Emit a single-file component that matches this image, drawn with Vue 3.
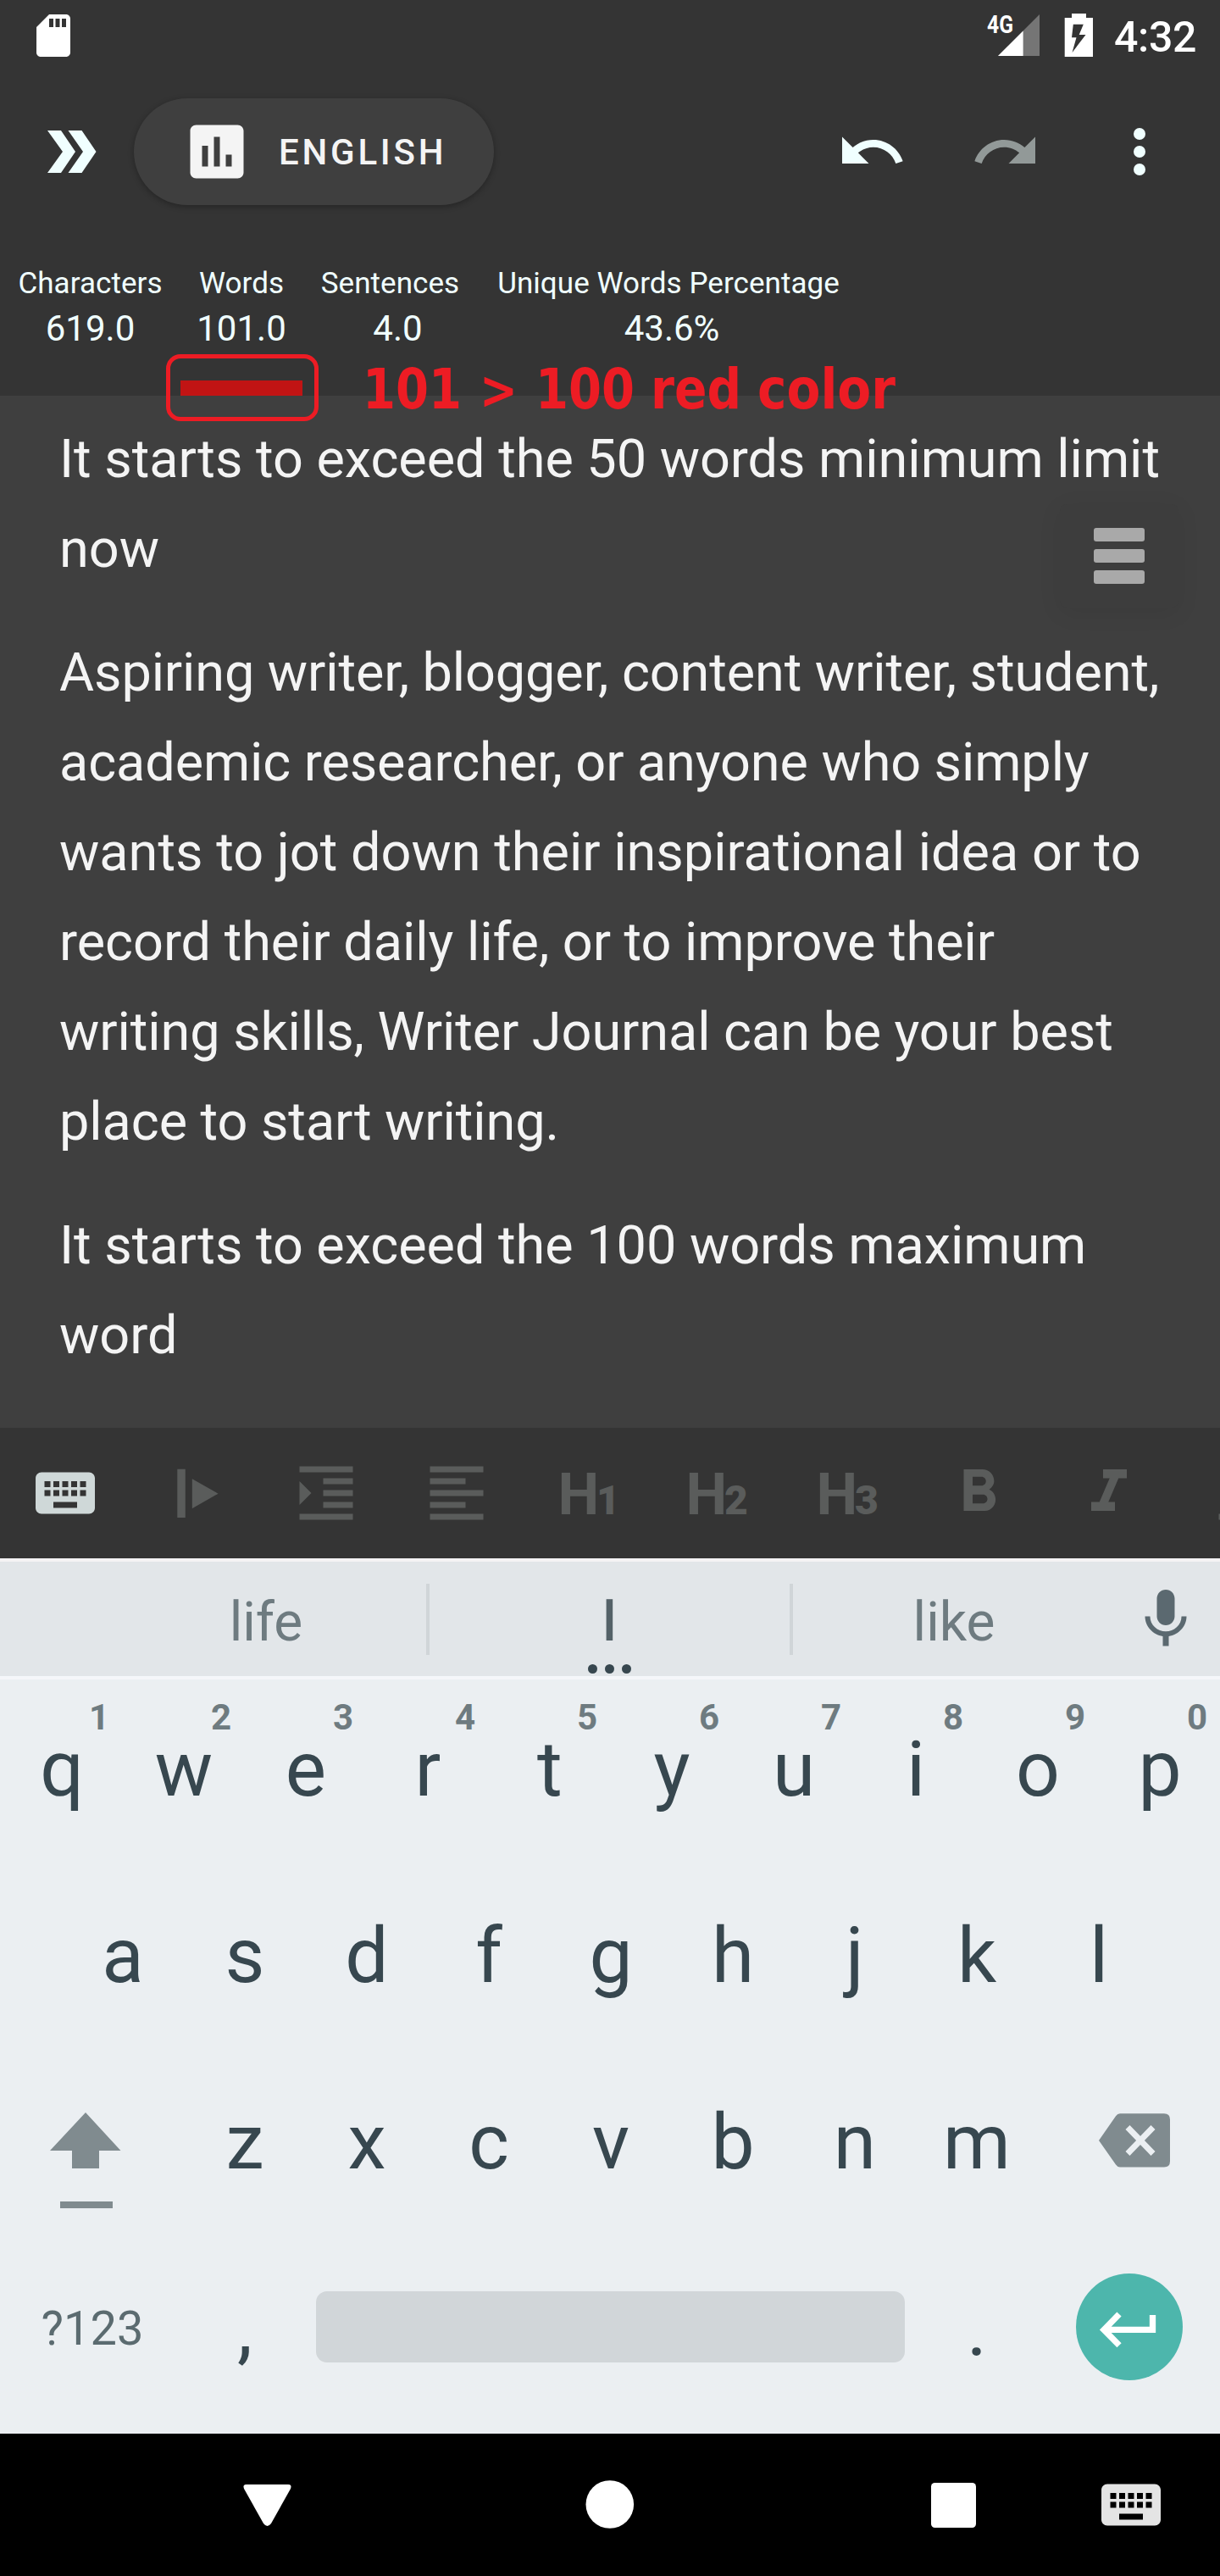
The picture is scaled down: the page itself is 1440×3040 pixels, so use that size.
<script setup>
const stats = [
  { label: 'Characters', value: '619.0' },
  { label: 'Words', value: '101.0', exceeded: true },
  { label: 'Sentences', value: '4.0', shift: 9 },
  { label: 'Unique Words Percentage', value: '43.6%', shift: 4 },
]

// Each line carries its own tracking in px
const paragraphs = [
  [
    { text: 'It starts to exceed the 50 words minimum limit', track: -0.04 },
    { text: 'now', track: 0 },
  ],
  [
    { text: 'Aspiring writer, blogger, content writer, student,', track: -0.11 },
    { text: 'academic researcher, or anyone who simply', track: -0.1 },
    { text: 'wants to jot down their inspirational idea or to', track: 0 },
    { text: 'record their daily life, or to improve their', track: -0.05 },
    { text: 'writing skills, Writer Journal can be your best', track: -0.075 },
    { text: 'place to start writing.', track: -0.07 },
  ],
  [
    { text: 'It starts to exceed the 100 words maximum', track: -0.045 },
    { text: 'word', track: 0 },
  ],
]

const keyboardPath =
  'M20 5H4c-1.1 0-1.99.9-1.99 2L2 17c0 1.1.9 2 2 2h16c1.1 0 2-.9 2-2V7c0-1.1-.9-2-2-2zm-9 3h2v2h-2V8zm0 3h2v2h-2v-2zM8 8h2v2H8V8zm0 3h2v2H8v-2zm-1 2H5v-2h2v2zm0-3H5V8h2v2zm9 7H8v-2h8v2zm0-4h-2v-2h2v2zm0-3h-2V8h2v2zm3 3h-2v-2h2v2zm0-3h-2V8h2v2z'

const tools = [
  { name: 'keyboard', path: keyboardPath, active: true },
  { name: 'cursor', path: 'M5.8 3.9h2.7v16.4H5.8zM10.8 7.2v10l8.8-5z' },
  { name: 'indent', path: 'M3 21h18v-2H3v2zM3 8v8l4-4-4-4zm8 9h10v-2H11v2zM3 3v2h18V3H3zm8 6h10V7H11v2zm0 4h10v-2H11v2z' },
  { name: 'align', path: 'M15 15H3v2h12v-2zm0-8H3v2h12V7zM3 13h18v-2H3v2zm0 8h18v-2H3v2zM3 3v2h18V3H3z' },
  { name: 'h1', level: '1', x: 7.5, dx: 53 },
  { name: 'h2', level: '2', x: 4.5, dx: 50 },
  { name: 'h3', level: '3', x: 4.5, dx: 50 },
  { name: 'bold', path: 'M15.6 10.79c.97-.67 1.65-1.77 1.65-2.79 0-2.26-1.75-4-4-4H7v14h7.04c2.09 0 3.71-1.7 3.71-3.79 0-1.52-.86-2.82-2.15-3.42zM10 6.5h3c.83 0 1.5.67 1.5 1.5s-.67 1.5-1.5 1.5h-3v-3zm3.5 9H10v-3h3.5c.83 0 1.5.67 1.5 1.5s-.67 1.5-1.5 1.5z' },
  { name: 'italic', path: 'M10 4v3h2.21l-3.42 8H6v3h8v-3h-2.21l3.42-8H18V4z' },
  { name: 'underline', path: 'M12 17c3.31 0 6-2.69 6-6V3h-2.5v8c0 1.93-1.57 3.5-3.5 3.5S8.5 12.93 8.5 11V3H6v8c0 3.31 2.69 6 6 6zm-7 2v2h14v-2H5z' },
]

const topRow = [...'qwertyuiop'].map((key, i) => ({ key, hint: String((i + 1) % 10) }))
const homeRow = [...'asdfghjkl']
const bottomRow = [...'zxcvbnm']
</script>

<template>
  <div class="phone">
    <div class="header">
      <div class="status">
        <svg class="sd" width="60" height="60" viewBox="0 0 24 24" fill="#fff">
          <path d="M18 2h-8L4.02 8 4 20c0 1.1.9 2 2 2h12c1.1 0 2-.9 2-2V4c0-1.1-.9-2-2-2zm-6 6h-2V4h2v4zm3 0h-2V4h2v4zm3 0h-2V4h2v4z" />
        </svg>
        <svg width="130" height="84" viewBox="1164 0 130 84" fill="#fff">
          <text x="1165" y="39" font-family="Roboto" font-weight="700" font-size="29" textLength="31" lengthAdjust="spacingAndGlyphs">4G</text>
          <path d="M1227 17V66H1178z" fill="#757575" />
          <path d="M1207.6 36.4V66H1178z" />
          <path fill-rule="evenodd" d="M1265 16h17v5h8v46h-33.300V21h8.300zM1266.800 28.700L1265 44.300h5.500L1265.500 62 1281.500 41h-7.800L1278.800 28.700z" />
        </svg>
        <span class="clock">4:32</span>
      </div>

      <div class="appbar">
        <svg class="chevrons" width="58" height="50" viewBox="56 154 58 50" fill="#f0ffff">
          <path d="M56 154h16l17 25-17 25H56l18-25zM80.500 154h16l17 25-17 25h-16l17.500-25z" />
        </svg>
        <div class="pill">
          <svg width="84" height="84" viewBox="0 0 24 24" fill="#f4f4f4">
            <path d="M19 3H5c-1.100 0-2 .9-2 2v14c0 1.100.9 2 2 2h14c1.100 0 2-.9 2-2V5c0-1.100-.9-2-2-2zM9 17H7v-7h2v7zm4 0h-2V7h2v10zm4 0h-2v-4h2v4z" />
          </svg>
          <span>ENGLISH</span>
        </div>
        <div class="actions">
          <svg width="84" height="84" viewBox="0 0 24 24" fill="#f0ffff">
            <path d="M12.5 8c-2.65 0-5.05.99-6.9 2.6L2 7v9h9l-3.62-3.62c1.39-1.16 3.16-1.88 5.12-1.88 3.54 0 6.55 2.31 7.6 5.5l2.37-.78C21.08 11.03 17.15 8 12.5 8z" />
          </svg>
          <svg width="84" height="84" viewBox="0 0 24 24" fill="#929998">
            <path d="M18.4 10.6C16.55 8.99 14.15 8 11.5 8c-4.65 0-8.58 3.03-9.96 7.22L3.9 16c1.05-3.19 4.05-5.5 7.6-5.5 1.95 0 3.73.72 5.12 1.88L13 16h9V7l-3.600 3.600z" />
          </svg>
          <svg width="84" height="84" viewBox="0 0 24 24" fill="#f0ffff">
            <circle cx="12" cy="6" r="2" /><circle cx="12" cy="12" r="2" /><circle cx="12" cy="18" r="2" />
          </svg>
        </div>
      </div>

      <div class="stats">
        <div v-for="s in stats" :key="s.label" class="stat">
          <span class="label">{{ s.label }}</span>
          <span class="value" :style="{ paddingLeft: (s.shift || 0) * 2 + 'px' }">{{ s.value }}</span>
          <i v-if="s.exceeded" class="bar"></i>
        </div>
      </div>
      <div class="mark"></div>
      <svg class="note" width="660" height="100" viewBox="420 410 660 100" fill="#ed1c24">
        <g font-family="'DejaVu Sans', sans-serif" font-weight="700" font-size="66">
          <text x="428" y="482" textLength="117" lengthAdjust="spacingAndGlyphs">101</text>
          <text x="566" y="482" font-size="62" textLength="45" lengthAdjust="spacingAndGlyphs">&gt;</text>
          <text x="632" y="482" textLength="117" lengthAdjust="spacingAndGlyphs">100</text>
          <text x="768" y="482" textLength="107" lengthAdjust="spacingAndGlyphs">red</text>
          <text x="894" y="482" textLength="163" lengthAdjust="spacingAndGlyphs">color</text>
        </g>
      </svg>
    </div>

    <div class="editor">
      <p v-for="(lines, i) in paragraphs" :key="i">
        <span v-for="line in lines" :key="line.text" :style="{ letterSpacing: line.track + 'px' }">{{ line.text }}</span>
      </p>
      <div class="float"><i></i><i></i><i></i></div>
    </div>

    <div class="toolbar">
      <div v-for="t in tools" :key="t.name" class="tool" :class="{ active: t.active }">
        <svg v-if="t.path" width="84" height="84" viewBox="0 0 24 24"><path :d="t.path" /></svg>
        <svg v-else width="84" height="84" viewBox="0 0 84 84" font-family="Roboto" font-weight="700">
          <text y="66.500"><tspan :x="t.x" font-size="69">H</tspan><tspan :x="t.dx" font-size="48" font-weight="900">{{ t.level }}</tspan></text>
        </svg>
      </div>
    </div>

    <div class="suggest">
      <span class="word first">life</span>
      <i class="sep"></i>
      <span class="word mid">l<b><i></i><i></i><i></i></b></span>
      <i class="sep"></i>
      <span class="word last">like</span>
      <svg class="mic" width="84" height="84" viewBox="0 0 24 24" fill="#5b6970">
        <path d="M12 14c1.66 0 2.99-1.34 2.99-3L15 5c0-1.66-1.34-3-3-3S9 3.34 9 5v6c0 1.66 1.34 3 3 3zm5.3-3c0 3-2.54 5.1-5.3 5.1S6.7 14 6.7 11H5c0 3.41 2.72 6.23 6 6.72V21h2v-3.28c3.28-.48 6-3.3 6-6.72h-1.700z" />
      </svg>
    </div>

    <div class="keyboard">
      <div class="row top">
        <span v-for="k in topRow" :key="k.key" class="key">{{ k.key }}<sup>{{ k.hint }}</sup></span>
      </div>
      <div class="row home">
        <span v-for="k in homeRow" :key="k" class="key">{{ k }}</span>
      </div>
      <div class="row">
        <svg width="216" height="220" viewBox="0 0 216 220" fill="#808b8f">
          <path d="M101 75l41.500 45H117v21H85v-21H59zM71 180h62v8H71z" />
        </svg>
        <span v-for="k in bottomRow" :key="k" class="key">{{ k }}</span>
        <svg width="216" height="220" viewBox="0 0 216 220">
          <path d="M98 76.300h52q7 0 7 7v49.200q0 7-7 7H98q-3 0-5-3L73 108l20-28.700q2-3 5-3z" fill="#808b8f" />
          <path d="M107 92.500l30 31M137 92.500l-30 31" stroke="#ebeff2" stroke-width="7" />
        </svg>
      </div>
      <div class="row">
        <span class="symbols">?123</span>
        <span class="key">,</span>
        <i class="space"></i>
        <span class="key">.</span>
        <div class="enter">
          <svg width="126" height="126" viewBox="1269.500 2683 126 126" fill="none" stroke="#fff" stroke-width="7.300">
            <path d="M1360 2732v17.400h-57M1320.500 2731l-18 18.400 18 18.400" />
          </svg>
        </div>
      </div>
    </div>

    <div class="nav">
      <svg width="1440" height="168" viewBox="0 2872 1440 168" fill="#fff">
        <path d="M291 2932h49q5 0 3 5l-23 41q-4.500 6-9 0l-23-41q-2-5 3-5z" />
        <circle cx="719.800" cy="2955.500" r="28.300" />
        <rect x="1099" y="2930" width="53" height="53" rx="4.500" />
        <svg x="1293" y="2914" width="84" height="84" viewBox="0 0 24 24" fill="#e4e4e4"><path :d="keyboardPath" /></svg>
      </svg>
    </div>
  </div>
</template>

<style>
body { margin: 0; background: #000; }
</style>

<style scoped>
.phone {
  width: 1440px;
  height: 3040px;
  overflow: hidden;
  display: flex;
  flex-direction: column;
  font-family: Roboto, sans-serif;
}
svg { display: block; flex: none; }
.header { position: relative; height: 467px; background: #343434; flex: none; }
.status { height: 84px; display: flex; align-items: center; color: #fff; }
.sd { margin-left: 33px; margin-right: 1071px; }
.clock { margin-left: 21px; margin-top: 4px; font-size: 50px; font-weight: 500; line-height: 84px; letter-spacing: -0.3px; }
.appbar { height: 190px; display: flex; align-items: center; }
.chevrons { margin-left: 56px; }
.pill {
  margin-left: 44px;
  width: 425px;
  height: 126px;
  box-sizing: border-box;
  padding-left: 56px;
  border-radius: 63px;
  background: #3f3f3f;
  box-shadow: 0 2px 7px rgba(0, 0, 0, 0.3);
  display: flex;
  align-items: center;
  gap: 31px;
  color: #f4f4f4;
  font-size: 42px;
  font-weight: 500;
  line-height: 52px;
  letter-spacing: 3.75px;
}
.pill span { padding-top: 1px; }
.actions { margin-left: 404px; display: flex; gap: 74px; }
.stats { height: 193px; display: grid; grid-template-columns: 213px 144px 207px 450px; color: #f0ffff; }
.stat { display: flex; flex-direction: column; align-items: center; white-space: nowrap; }
.label { margin-top: 35px; font-size: 35px; line-height: 52px; letter-spacing: 0.06px; }
.value { font-size: 42px; line-height: 54px; }
.bar { width: 144px; height: 18px; margin-top: auto; background: #c11414; }
.mark {
  position: absolute;
  left: 196px;
  top: 418px;
  width: 180px;
  height: 79px;
  box-sizing: border-box;
  border: 5px solid #ed1c24;
  border-radius: 17px;
  z-index: 2;
}
.note { position: absolute; left: 420px; top: 410px; z-index: 2; }
.editor {
  position: relative;
  height: 1218px;
  box-sizing: border-box;
  padding: 22px 0 0 70px;
  background: #3f3f3f;
  color: #f4f4f4;
  font-size: 63px;
  line-height: 106px;
  flex: none;
}
p { margin: 0 0 40px; display: flex; flex-direction: column; white-space: nowrap; }
.float {
  position: absolute;
  left: 1251px;
  top: 128px;
  width: 140px;
  height: 122px;
  border-radius: 8px;
  background: #3d3d3d;
  box-shadow: 0 6px 28px rgba(0, 0, 0, 0.07);
  display: flex;
  flex-direction: column;
  align-items: center;
  justify-content: center;
  gap: 9px;
}
.float i { width: 60px; height: 16px; border-radius: 3px; background: #a9a9a9; }
.toolbar { height: 154px; display: flex; background: #343434; fill: #5a5c5b; flex: none; }
.tool { width: 154px; flex: none; display: flex; align-items: center; justify-content: center; }
.tool.active { fill: #cfd8d8; }
.suggest {
  height: 143px;
  box-sizing: border-box;
  border-top: 4px solid #f4f3f4;
  border-bottom: 4px solid #f5f7fa;
  background: #e2e6e9;
  display: flex;
  align-items: center;
  color: #6e7b80;
  font-size: 64px;
  line-height: 135px;
  flex: none;
}
.word { text-align: center; height: 135px; padding-top: 4px; box-sizing: border-box; }
.first { width: 378px; padding-left: 125px; box-sizing: content-box; height: 131px; }
.mid { position: relative; width: 425px; color: #546268; font-weight: 500; }
.mid b { position: absolute; left: 0; right: 0; bottom: 3px; display: flex; justify-content: center; gap: 9px; }
.mid b i { width: 11px; height: 11px; border-radius: 50%; background: #37474f; }
.last { width: 380px; }
.sep { width: 4px; height: 84px; background: #d0d5d8; }
.mic { margin-left: 18px; margin-top: 1px; }
.keyboard { height: 890px; background: #ebeff2; color: #37474f; font-size: 91px; flex: none; }
.row { height: 220px; display: flex; align-items: center; }
.key { width: 144px; box-sizing: border-box; padding-left: 2px; text-align: center; line-height: 220px; flex: none; }
.top { height: 216px; }
.top .key { position: relative; line-height: 212px; height: 216px; }
sup {
  position: absolute;
  left: 97px;
  top: 20px;
  width: 40px;
  font-size: 42px;
  line-height: 49px;
  font-weight: 700;
  color: #6e7b80;
}
.home { padding-left: 72px; }
.symbols { width: 216px; box-sizing: border-box; padding-left: 2px; text-align: center; font-size: 56px; color: #5b6b70; }
.space { width: 695px; height: 84px; margin: 0 12px 4px 13px; border-radius: 13px; background: #d1d6d9; }
.enter { width: 126px; height: 126px; margin: 0 0 4px 46px; border-radius: 50%; background: #4db6ac; }
.nav { height: 168px; background: #000; flex: none; }
</style>
